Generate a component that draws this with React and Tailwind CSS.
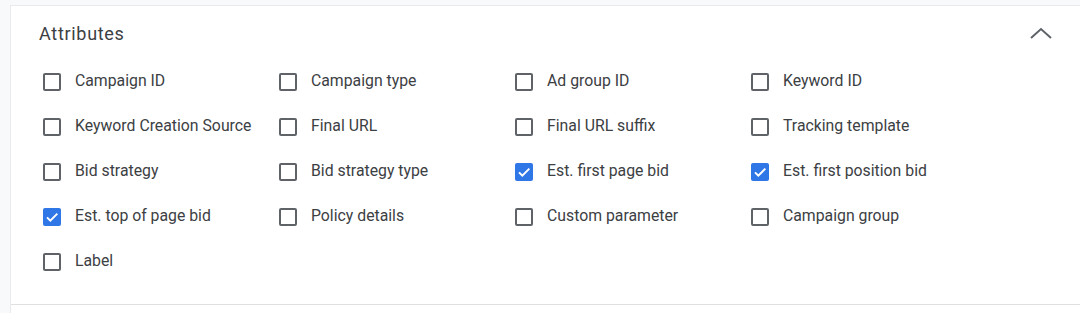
import React from 'react';

const rows = [
  [['Campaign ID', false], ['Campaign type', false], ['Ad group ID', false], ['Keyword ID', false]],
  [['Keyword Creation Source', false], ['Final URL', false], ['Final URL suffix', false], ['Tracking template', false]],
  [['Bid strategy', false], ['Bid strategy type', false], ['Est. first page bid', true], ['Est. first position bid', true]],
  [['Est. top of page bid', true], ['Policy details', false], ['Custom parameter', false], ['Campaign group', false]],
  [['Label', false]],
];

const Checkbox = ({ checked }) =>
  checked ? (
    <span className="w-[18px] h-[18px] rounded-[2px] bg-[#2f76e6] flex items-center justify-center shrink-0">
      <svg width="16" height="16" viewBox="0 0 24 24" fill="none" stroke="#fff" strokeWidth="3">
        <path d="M4.5 12.5l5 5L20 7" />
      </svg>
    </span>
  ) : (
    <span className="w-[18px] h-[18px] rounded-[2px] border-2 border-[#5f6368] shrink-0" />
  );

export default function App() {
  return (
    <div className="w-[1080px] h-[313px] bg-[#f8f9fa] flex flex-col overflow-hidden" style={{ fontFamily: 'Roboto, "Liberation Sans", sans-serif' }}>
      <div className="h-[5px] shrink-0" />
      <div className="ml-[10px] flex-1 bg-white border-t border-l border-[#e8eaed] flex flex-col">
        <div className="border-b border-[#e0e0e0] pb-[6px]">
          <div className="flex items-center justify-between pl-[28px] pr-[27px] pt-[14px] h-[41px]">
            <span className="text-[18px] tracking-[0.7px] text-[#3c4043]">Attributes</span>
            <svg width="24" height="24" viewBox="0 0 24 24" fill="none" stroke="#5f6368" strokeWidth="2">
              <path d="M2 16l10-9 10 9" />
            </svg>
          </div>
          <div className="pl-[32px] pt-[26px] flex flex-col">
            {rows.map((row, i) => (
              <div key={i} className="flex h-[45px]">
                {row.map(([label, checked]) => (
                  <div key={label} className="w-[236px] flex items-start gap-[14px]">
                    <Checkbox checked={checked} />
                    <span className="text-[15.8px] leading-[18px] text-[#3c4043] -mt-[1px]">{label}</span>
                  </div>
                ))}
              </div>
            ))}
          </div>
        </div>
      </div>
    </div>
  );
}
